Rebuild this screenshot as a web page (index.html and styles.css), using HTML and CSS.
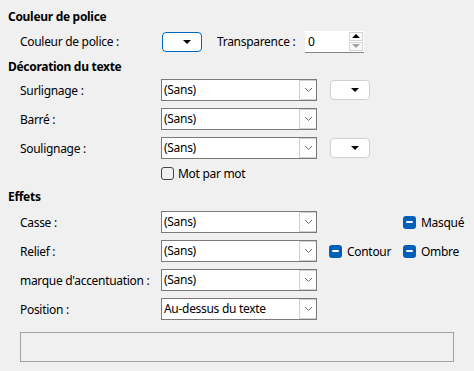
FILE: index.html
```html
<!DOCTYPE html>
<html lang="fr">
<head>
<meta charset="utf-8">
<link rel="stylesheet" href="styles.css">
</head>
<body>
<div class="page">
  <div class="heading">Couleur de police</div>
  <div class="row row-first">
    <span class="label">Couleur de police :</span>
    <div class="colorbtn focused"><span class="tri"></span></div>
    <span class="label2">Transparence :</span>
    <div class="spin">
      <span class="spin-val">0</span>
      <div class="spin-btns">
        <span class="sb up"><span class="tri-up"></span></span>
        <span class="sb down"><span class="tri-down"></span></span>
      </div>
    </div>
  </div>

  <div class="heading h2">Décoration du texte</div>
  <div class="row r-a">
    <span class="label">Surlignage :</span>
    <div class="combo"><span class="combo-val">(Sans)</span><span class="combo-btn"><svg width="9" height="6" viewBox="0 0 9 6"><path d="M1 1 L4.5 4.5 L8 1" fill="none" stroke="#707070" stroke-width="1"/></svg></span></div>
    <div class="colorbtn side"><span class="tri"></span></div>
  </div>
  <div class="row r-b">
    <span class="label">Barré :</span>
    <div class="combo"><span class="combo-val">(Sans)</span><span class="combo-btn"><svg width="9" height="6" viewBox="0 0 9 6"><path d="M1 1 L4.5 4.5 L8 1" fill="none" stroke="#707070" stroke-width="1"/></svg></span></div>
  </div>
  <div class="row r-b">
    <span class="label">Soulignage :</span>
    <div class="combo"><span class="combo-val">(Sans)</span><span class="combo-btn"><svg width="9" height="6" viewBox="0 0 9 6"><path d="M1 1 L4.5 4.5 L8 1" fill="none" stroke="#707070" stroke-width="1"/></svg></span></div>
    <div class="colorbtn side"><span class="tri"></span></div>
  </div>
  <div class="row r-check">
    <span class="label"></span>
    <span class="check"></span><span class="check-text">Mot par mot</span>
  </div>

  <div class="heading h3">Effets</div>
  <div class="row r-c">
    <span class="label">Casse :</span>
    <div class="combo"><span class="combo-val">(Sans)</span><span class="combo-btn"><svg width="9" height="6" viewBox="0 0 9 6"><path d="M1 1 L4.5 4.5 L8 1" fill="none" stroke="#707070" stroke-width="1"/></svg></span></div>
    <span class="opt-gap"></span>
    <span class="opt"><span class="ind"><span class="bar"></span></span>Masqué</span>
  </div>
  <div class="row r-b">
    <span class="label">Relief :</span>
    <div class="combo"><span class="combo-val">(Sans)</span><span class="combo-btn"><svg width="9" height="6" viewBox="0 0 9 6"><path d="M1 1 L4.5 4.5 L8 1" fill="none" stroke="#707070" stroke-width="1"/></svg></span></div>
    <span class="opt opt-contour"><span class="ind"><span class="bar"></span></span>Contour</span>
    <span class="opt"><span class="ind"><span class="bar"></span></span>Ombre</span>
  </div>
  <div class="row r-b">
    <span class="label">marque d'accentuation :</span>
    <div class="combo"><span class="combo-val">(Sans)</span><span class="combo-btn"><svg width="9" height="6" viewBox="0 0 9 6"><path d="M1 1 L4.5 4.5 L8 1" fill="none" stroke="#707070" stroke-width="1"/></svg></span></div>
  </div>
  <div class="row r-b">
    <span class="label">Position :</span>
    <div class="combo"><span class="combo-val">Au-dessus du texte</span><span class="combo-btn"><svg width="9" height="6" viewBox="0 0 9 6"><path d="M1 1 L4.5 4.5 L8 1" fill="none" stroke="#707070" stroke-width="1"/></svg></span></div>
  </div>

  <div class="preview"></div>
</div>
</body>
</html>
```

FILE: styles.css
```css
* { box-sizing: border-box; }
html, body {
  margin: 0;
  padding: 0;
  background: #f0f0f0;
}
body {
  width: 474px;
  height: 371px;
  overflow: hidden;
  font-family: "Noto Sans", "Open Sans", sans-serif;
  font-size: 12px;
  letter-spacing: -0.3px;
  color: #000;
}
.page {
  padding-top: 8px;
  display: flex;
  flex-direction: column;
}
.heading {
  height: 18px;
  line-height: 18px;
  padding-left: 8px;
  font-weight: bold;
}
.h2 { margin-top: 6px; }
.h3 { margin-top: 8px; }
.row {
  display: flex;
  align-items: center;
  height: 22px;
}
.row-first { margin-top: 5px; height: 21px; }
.r-a { margin-top: 3px; }
.r-b { margin-top: 7px; }
.r-c { margin-top: 5px; }
.r-check { margin-top: 7px; height: 14px; }
.label {
  width: 161px;
  padding-left: 20px;
  flex: none;
  white-space: nowrap;
}
.label2 {
  margin-left: 15px;
  width: 88px;
  flex: none;
}
.combo {
  width: 156px;
  height: 22px;
  background: #fff;
  border: 1px solid #7a7a7a;
  display: flex;
  align-items: stretch;
  flex: none;
}
.combo-val {
  flex: 1;
  line-height: 20px;
  padding-left: 2px;
  white-space: nowrap;
}
.combo-btn {
  width: 17px;
  border: 1px solid #d0d0d0;
  border-right: none;
  display: flex;
  align-items: center;
  justify-content: center;
  background: #fdfdfd;
}
.colorbtn {
  width: 40px;
  height: 20px;
  background: #fff;
  border: 1px solid #d0d0d0;
  border-radius: 4px;
  display: flex;
  align-items: center;
  justify-content: flex-end;
  padding-right: 10px;
  flex: none;
}
.colorbtn.focused {
  border-color: #0067c0;
  margin-left: 1px;
}
.colorbtn.side { margin-left: 13px; }
.tri {
  width: 0;
  height: 0;
  border-left: 4px solid transparent;
  border-right: 4px solid transparent;
  border-top: 4px solid #000;
}
.spin {
  width: 59px;
  height: 22px;
  background: #fff;
  border-bottom: 1px solid #868686;
  display: flex;
  flex: none;
}
.spin-val {
  flex: 1;
  padding-left: 3px;
  line-height: 21px;
}
.spin-btns {
  width: 15px;
  display: flex;
  flex-direction: column;
  padding: 1px 1px 1px 0;
  gap: 1px;
}
.sb {
  flex: 1;
  border: 1px solid #d4d4d4;
  background: #fafafa;
  display: flex;
  align-items: center;
  justify-content: center;
}
.tri-up {
  width: 0; height: 0;
  border-left: 4px solid transparent;
  border-right: 4px solid transparent;
  border-bottom: 4px solid #000;
}
.tri-down {
  width: 0; height: 0;
  border-left: 4px solid transparent;
  border-right: 4px solid transparent;
  border-top: 4px solid #a0a0a0;
}
.check {
  width: 13px;
  height: 13px;
  border: 1px solid #444;
  border-radius: 3px;
  flex: none;
}
.check-text { margin-left: 4px; }
.opt-gap { width: 86px; flex: none; }
.opt {
  display: flex;
  align-items: center;
  width: 74px;
  flex: none;
}
.opt-contour { margin-left: 12px; }
.ind {
  width: 13px;
  height: 13px;
  border-radius: 3px;
  background: #005fb8;
  display: flex;
  align-items: center;
  justify-content: center;
  margin-right: 5px;
  flex: none;
}
.bar {
  width: 7px;
  height: 2px;
  background: #fff;
  border-radius: 1px;
}
.preview {
  margin: 12px 0 0 20px;
  width: 434px;
  height: 30px;
  border: 1px solid #a0a0a0;
}
```
